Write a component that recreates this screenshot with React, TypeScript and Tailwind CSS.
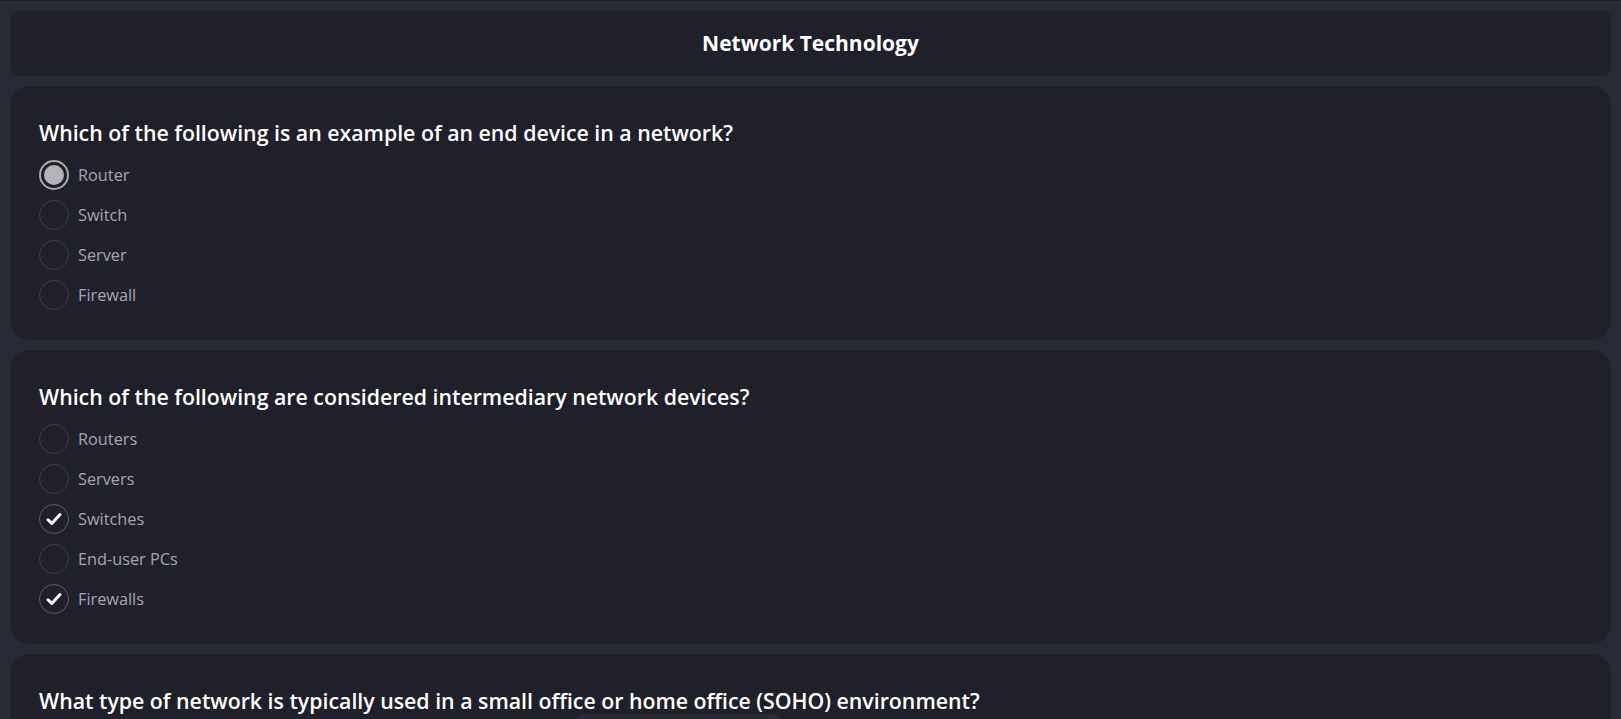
import React from 'react';

type Q = { text: string; kind: 'radio' | 'check'; options: string[]; picked: number[] };

const questions: Q[] = [
  {
    text: 'Which of the following is an example of an end device in a network?',
    kind: 'radio',
    options: ['Router', 'Switch', 'Server', 'Firewall'],
    picked: [0],
  },
  {
    text: 'Which of the following are considered intermediary network devices?',
    kind: 'check',
    options: ['Routers', 'Servers', 'Switches', 'End-user PCs', 'Firewalls'],
    picked: [2, 4],
  },
  {
    text: 'What type of network is typically used in a small office or home office (SOHO) environment?',
    kind: 'radio',
    options: [],
    picked: [],
  },
];

function Mark({ kind, on }: { kind: Q['kind']; on: boolean }) {
  if (!on) {
    return <span className="w-[30px] h-[30px] rounded-full border border-[#3a3b46] shrink-0" />;
  }
  if (kind === 'radio') {
    return (
      <span className="w-[30px] h-[30px] rounded-full border-2 border-[#a9a9ae] shrink-0 flex items-center justify-center">
        <span className="w-[20px] h-[20px] rounded-full bg-[#b3b3b8]" />
      </span>
    );
  }
  return (
    <span className="w-[30px] h-[30px] rounded-full border border-[#5a5b66] shrink-0 flex items-center justify-center">
      <svg width="18" height="18" viewBox="0 0 24 24" fill="none" stroke="#ffffff" strokeWidth="4" strokeLinecap="round" strokeLinejoin="round">
        <path d="M4 13l5 5L20 6" />
      </svg>
    </span>
  );
}

function Card({ q }: { q: Q }) {
  return (
    <div className="bg-[#20202a] rounded-[20px] px-[29px] pt-[31px] pb-[30px] min-h-[160px]">
      <h2 className="text-[21.3px] leading-[31px] font-semibold text-white mb-[12px]">{q.text}</h2>
      <div className="flex flex-col gap-[10px]">
        {q.options.map((o, i) => (
          <label key={o} className="flex items-center gap-[9px] h-[30px]">
            <Mark kind={q.kind} on={q.picked.includes(i)} />
            <span className="text-[16.3px] text-[#a6a6ae]">{o}</span>
          </label>
        ))}
      </div>
    </div>
  );
}

export default function App() {
  return (
    <div
      className="min-h-screen bg-[#272935] border-t border-[#1e1f29] px-[10px] pt-[10px] pb-10 flex flex-col gap-[10px] overflow-hidden"
      style={{ fontFamily: '"Open Sans", "Noto Sans", sans-serif' }}
    >
      <div className="bg-[#20202a] rounded-[8px] h-[65px] flex items-center justify-center">
        <h1 className="text-[21px] font-bold text-white">Network Technology</h1>
      </div>
      {questions.map((q) => (
        <Card key={q.text} q={q} />
      ))}
      <div className="fixed left-[573px] top-[714px] w-[210px] h-[40px] rounded-t-[12px] bg-[#2a2b34]" />
    </div>
  );
}
